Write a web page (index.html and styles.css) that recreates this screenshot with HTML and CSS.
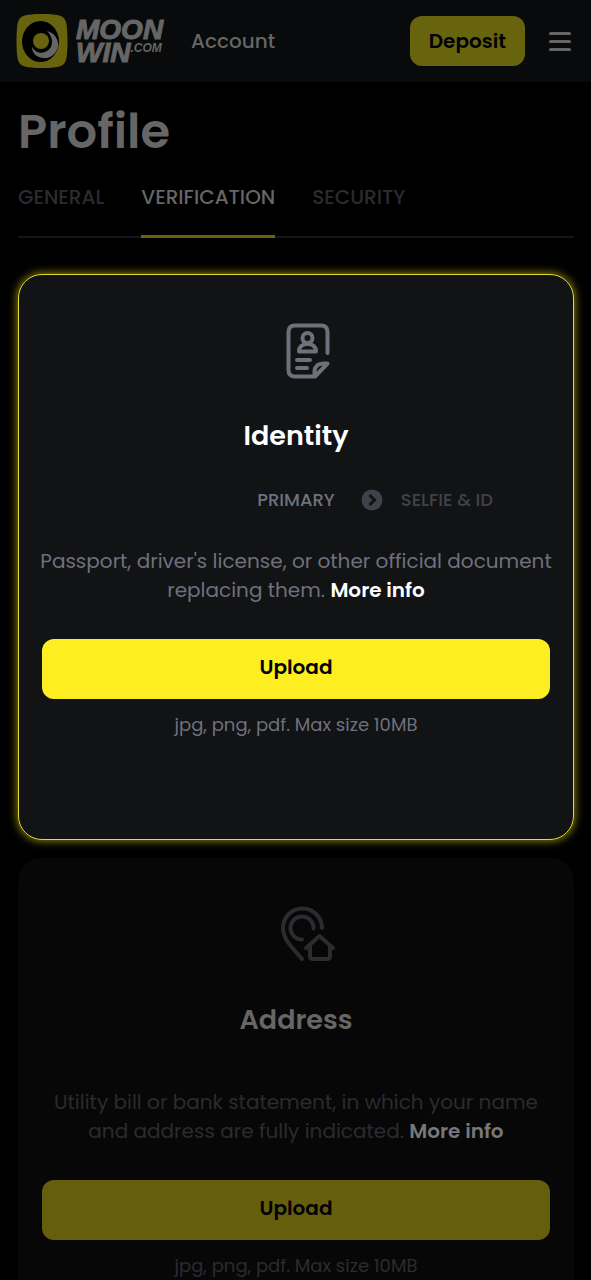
FILE: index.html
```html
<!DOCTYPE html>
<html lang="en">
<head>
<meta charset="utf-8">
<meta name="viewport" content="width=device-width, initial-scale=1">
<title>Profile – Verification</title>
<link rel="stylesheet" href="styles.css">
</head>
<body>
<header class="header">
  <a class="logo" href="#" aria-label="Moonwin.com">
    <svg class="logo-mark" viewBox="0 0 52 54" aria-hidden="true">
      <path fill="#68630d" d="M26 0C44 0 48 2 50 8C52 14 52 40 50 46C48 52 44 54 26 54C8 54 4 52 2 46C0 40 0 14 2 8C4 2 8 0 26 0Z"/>
      <ellipse cx="24.500" cy="27.500" rx="18.500" ry="20.500" fill="#000"/>
      <path fill="#666" d="M31 17C39 19 43 26 42 33C40 41 33 45 27 44C20 43 16 39 16 33C19 38 24 40 29 38C37 35 39 25 31 17Z"/>
      <circle cx="25" cy="27" r="8" fill="#68630d"/>
    </svg>
    <span class="logo-text">
      <span>MOON</span>
      <span class="logo-row">WIN<small>.COM</small></span>
    </span>
  </a>
  <span class="section">Account</span>
  <button class="deposit" type="button">Deposit</button>
  <button class="menu" type="button" aria-label="Menu">
    <svg viewBox="0 0 22 20" aria-hidden="true"><path d="M1.500 2.500h19M1.500 10.500h19M1.500 18.500h19"/></svg>
  </button>
</header>

<main class="main">
  <h1 class="title">Profile</h1>
  <nav class="tabs">
    <a class="tab" href="#general">GENERAL</a>
    <a class="tab active" href="#verification" aria-current="page">VERIFICATION</a>
    <a class="tab" href="#security">SECURITY</a>
  </nav>

  <section class="card highlight">
    <svg class="icon" viewBox="0 0 80 80" aria-hidden="true">
      <path d="M57.500 43V22Q57.500 15.500 51 15.500H25Q18.500 15.500 18.500 22V60Q18.500 66.500 25 66.500H45L57.500 53.500H53Q44.500 54 44.500 62V66.500"/>
      <circle cx="37.500" cy="28" r="5"/>
      <path d="M29 41.500H46C46 37 43 34 37.500 34S29 37 29 41.500ZM27 50H40M27 58H37"/>
    </svg>
    <h2 class="card-title">Identity</h2>
    <div class="steps">
      <span class="step current">PRIMARY</span>
      <span class="next">
        <svg class="arrow" viewBox="0 0 22 22" aria-hidden="true"><circle cx="11" cy="11" r="10.500"/><path d="M8.500 6L13.500 11L8.500 16"/></svg>
        <span class="step">SELFIE &amp; ID</span>
      </span>
    </div>
    <p class="text">Passport, driver's license, or other official document replacing them. <a href="#identity-info">More info</a></p>
    <button class="upload" type="button">Upload</button>
    <p class="hint">jpg, png, pdf. Max size 10MB</p>
  </section>

  <section class="card dim">
    <svg class="icon" viewBox="0 0 80 80" aria-hidden="true">
      <path d="M52 34A19.500 19.500 0 0 0 13 34C13 46 23 54 32 65M43.500 34.500A11.500 11.500 0 1 0 32 45.500M36 54L49.500 42L63 54M40 52V62Q40 65 43 65H57Q60 65 60 62V52"/>
    </svg>
    <h2 class="card-title">Address</h2>
    <p class="text">Utility bill or bank statement, in which your name and address are fully indicated. <a href="#address-info">More info</a></p>
    <button class="upload" type="button">Upload</button>
    <p class="hint">jpg, png, pdf. Max size 10MB</p>
  </section>
</main>
</body>
</html>
```
FILE: styles.css
```css
* {
  box-sizing: border-box;
}

html {
  background: #000;
}

body {
  margin: 0;
  color: #666;
  font-family: Poppins, Inter, "Open Sans", sans-serif;
  font-size: 20px;
  line-height: 29px;
}

a {
  color: inherit;
  text-decoration: none;
}

button {
  border: 0;
  font: inherit;
  cursor: pointer;
}

h1,
h2,
p {
  margin: 0;
}

.header {
  display: flex;
  align-items: center;
  min-height: 82px;
  padding: 0 20px 0 16px;
  background: #080a0b;
}

.logo {
  display: flex;
  align-items: center;
  gap: 8px;
}

.logo-mark {
  width: 52px;
  height: 54px;
}

.logo-text {
  display: flex;
  flex-direction: column;
  font-family: "Liberation Sans", Arial, sans-serif;
  font-size: 28px;
  font-style: italic;
  font-weight: 700;
  line-height: 23px;
  -webkit-text-stroke: 1px #666;
}

.logo-row {
  display: flex;
  align-items: flex-start;
}

.logo-row small {
  font-size: 12px;
  line-height: 14px;
  -webkit-text-stroke: 0;
}

.section {
  margin-left: 28px;
  font-weight: 500;
}

.deposit {
  min-height: 50px;
  margin-left: auto;
  padding: 0 19px;
  border-radius: 12px;
  background: #68630d;
  color: #000;
  font-weight: 600;
}

.menu {
  display: flex;
  margin-left: 24px;
  padding: 0;
  background: none;
}

.menu svg {
  width: 22px;
  height: 20px;
  fill: none;
  stroke: #666;
  stroke-width: 3;
  stroke-linecap: round;
}

.main {
  padding: 18px 17px 0 18px;
}

.title {
  font-size: 48px;
  font-weight: 600;
  line-height: 64px;
}

.tabs {
  display: flex;
  gap: 37px;
  margin-bottom: 36px;
  border-bottom: 2px solid #15151a;
}

.tab {
  margin-bottom: -2px;
  padding: 19px 0 23px;
  border-bottom: 3px solid transparent;
  color: #2b2b30;
  font-weight: 500;
}

.tab.active {
  border-color: #68630d;
  color: #666;
}

.card {
  display: flex;
  flex-direction: column;
  align-items: center;
  margin-bottom: 18px;
  padding: 36px 24px 101px;
  border-radius: 24px;
  background: #111314;
  color: #70707d;
  text-align: center;
}

.highlight {
  outline: 1px solid #e6da30;
  outline-offset: -1px;
  box-shadow: 0 0 9px 1px #8d840b;
}

.icon {
  width: 108px;
  height: 80px;
  padding-left: 28px;
  fill: none;
  stroke: currentColor;
  stroke-width: 4;
  stroke-linecap: round;
  stroke-linejoin: round;
}

.card-title {
  margin: 26px 0 29px;
  color: #fff;
  font-size: 27px;
  font-weight: 600;
  line-height: 40px;
}

.steps {
  display: grid;
  grid-template-columns: 1fr auto 1fr;
  align-self: stretch;
  margin-bottom: 33px;
}

.step {
  color: #41414a;
  font-size: 18px;
  font-weight: 500;
}

.step.current {
  grid-column: 2;
  color: #70707d;
}

.next {
  display: flex;
  align-items: center;
  gap: 18px;
  padding-left: 26px;
  white-space: nowrap;
}

.arrow {
  width: 22px;
  height: 22px;
}

.arrow circle {
  fill: #41414a;
}

.arrow path {
  fill: none;
  stroke: #111314;
  stroke-width: 3;
}

.text {
  margin: 0 -8px;
}

.text a {
  color: #fff;
  font-weight: 600;
}

.upload {
  width: 100%;
  min-height: 60px;
  margin: 34px 0 11px;
  padding: 0 0 3px;
  border-radius: 12px;
  background: #fdee21;
  color: #000;
  font-weight: 600;
}

.hint {
  font-size: 18px;
}

.dim {
  margin-bottom: 0;
  background: #070707;
  color: #2b2b30;
}

.dim .card-title {
  margin-bottom: 48px;
  color: #666;
}

.dim .text a {
  color: #777;
}

.dim .upload {
  background: #655f0d;
}
```
